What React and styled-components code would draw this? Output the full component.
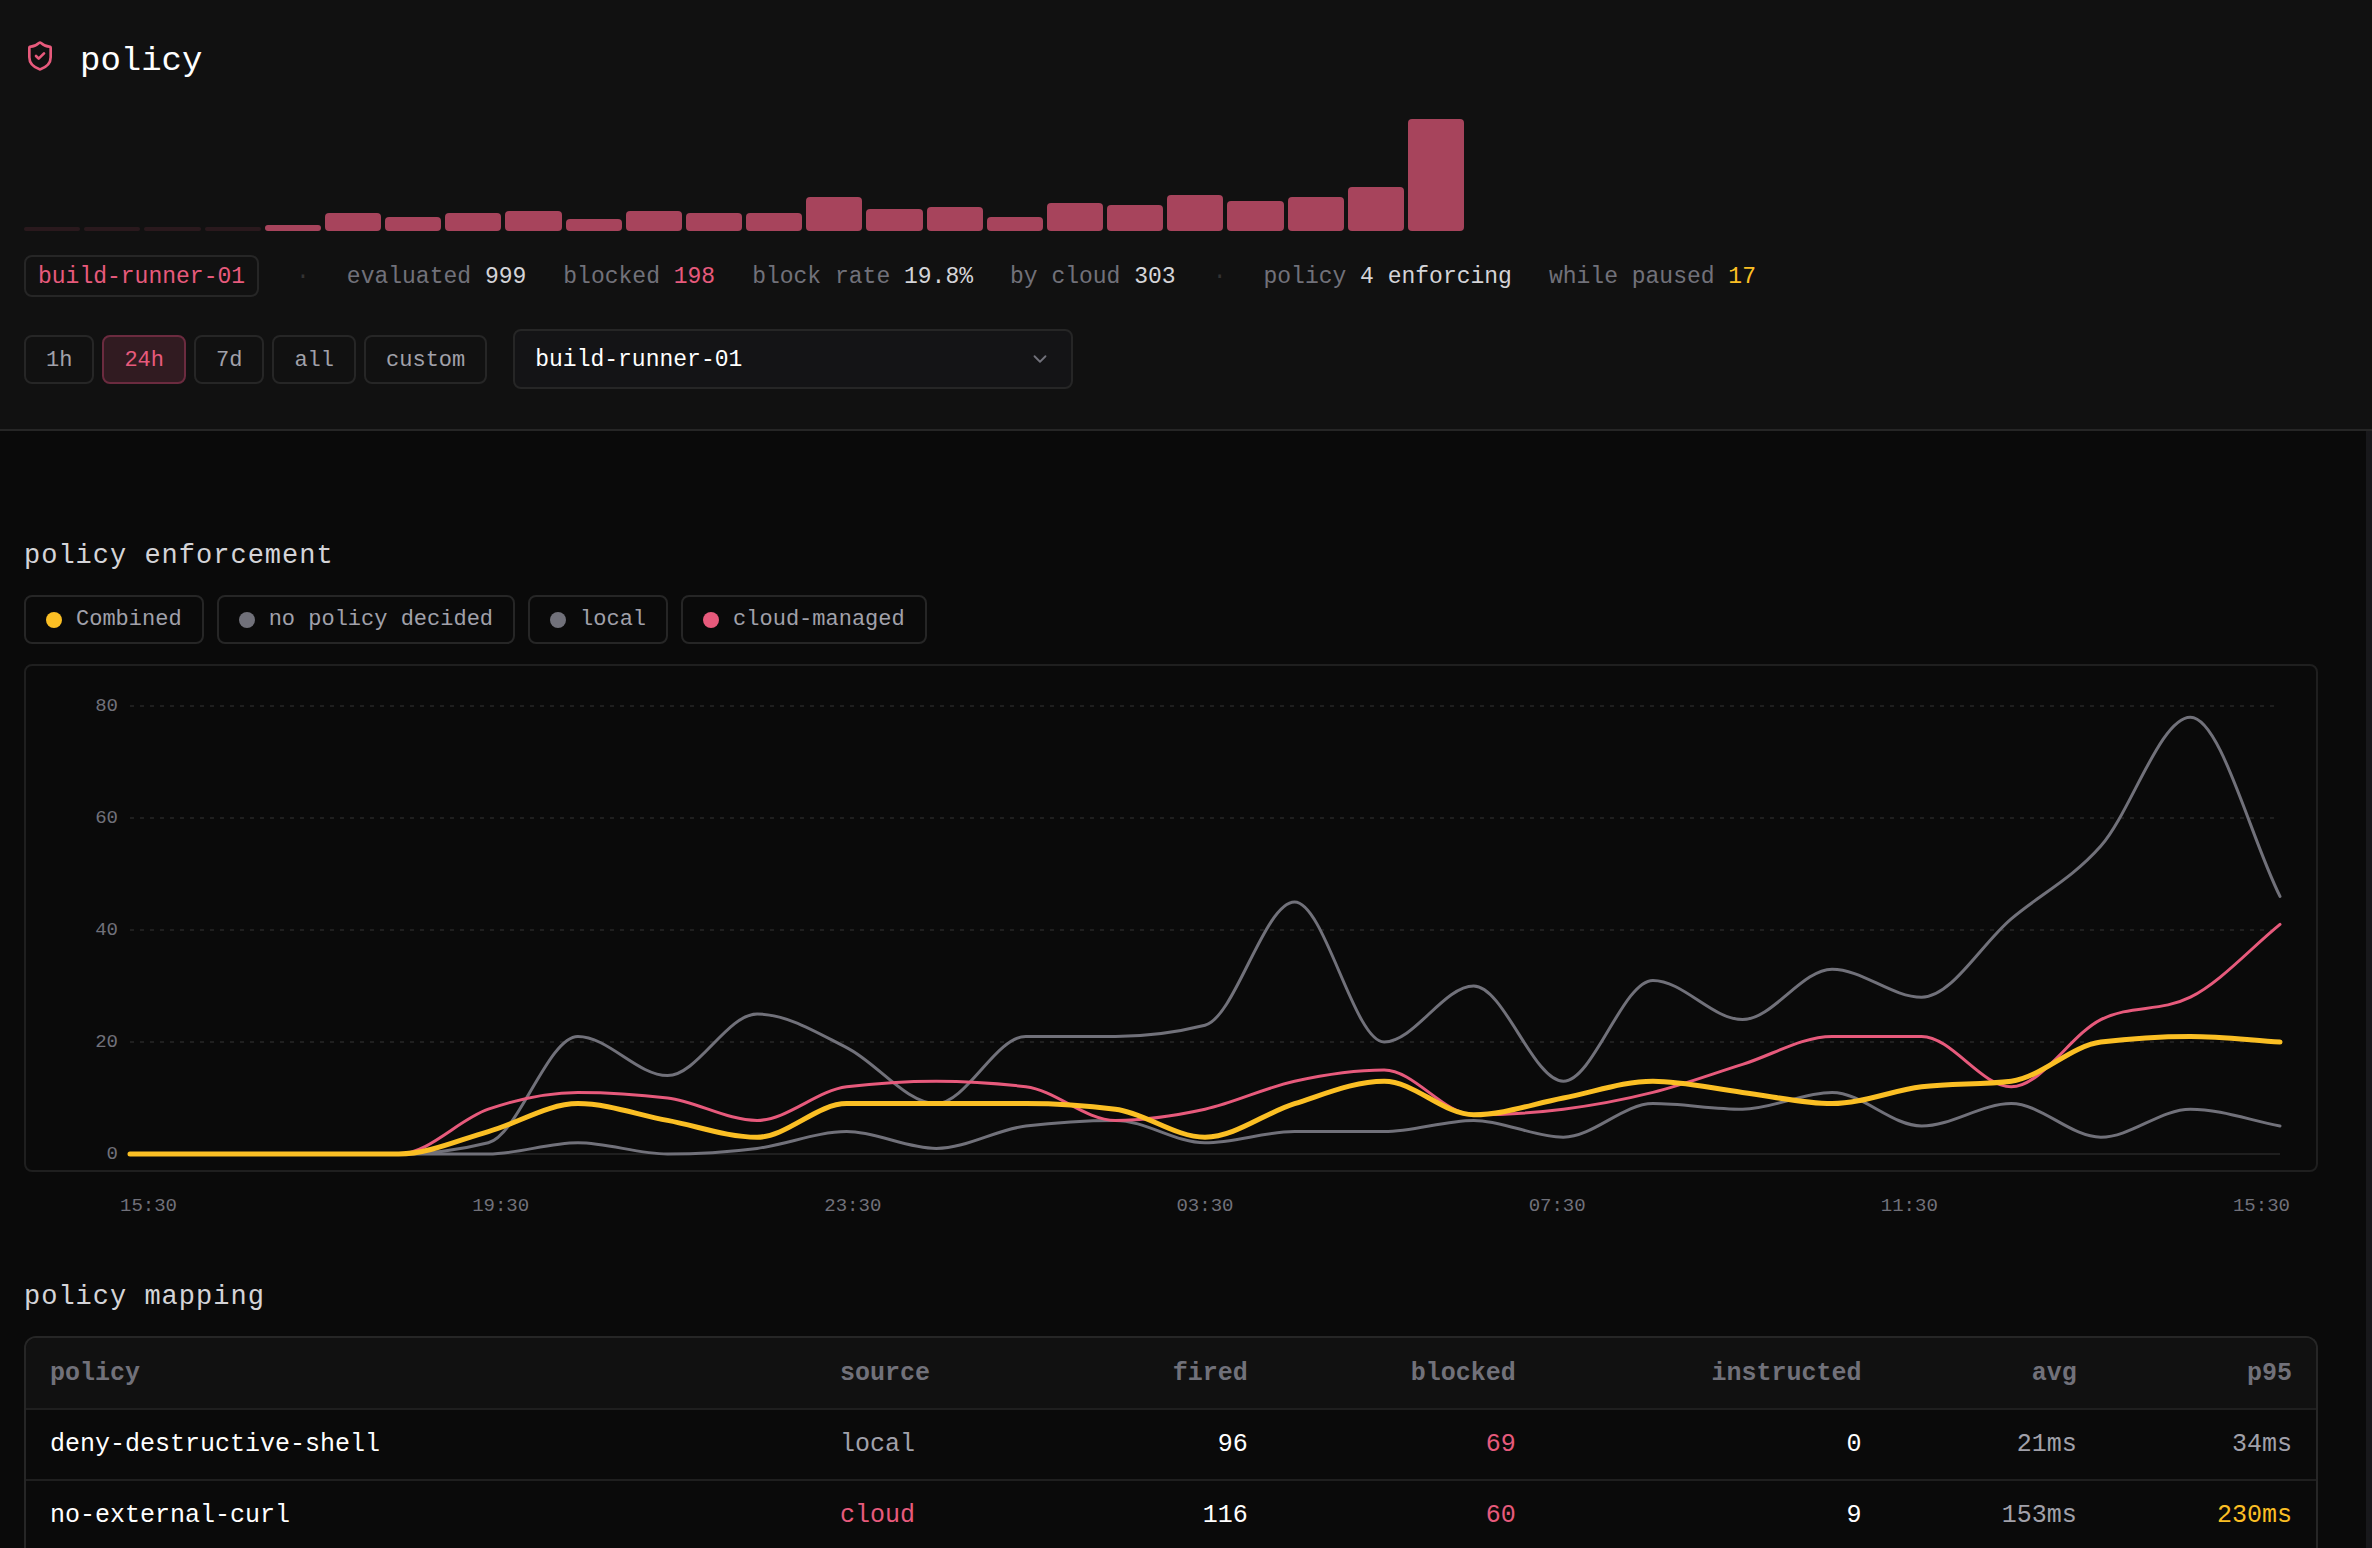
import styled, { createGlobalStyle } from "styled-components";
import { ChevronDown, ShieldCheck } from "lucide-react";

const GlobalStyle = createGlobalStyle`
  :root {
    --bg: #0a0a0a;
    --panel: #111111;
    --field: #141416;
    --line: #262626;
    --line-soft: #1f1f1f;
    --white: #ffffff;
    --text: #d4d4d8;
    --muted: #a1a1aa;
    --dim: #71717a;
    --accent: #e75a7c;
    --amber: #fbbf24;
  }

  * {
    box-sizing: border-box;
  }

  body {
    margin: 0;
    background: var(--bg);
    color: var(--text);
    font-family: "Liberation Mono", monospace;
    font-size: 22px;
  }

  button, select {
    font-family: inherit;
  }
`;

const Page = styled.div`
  display: flex;
  flex-direction: column;
  height: 100vh;
`;

const Header = styled.header`
  display: flex;
  flex-direction: column;
  padding: 36px 24px 40px;
  background: var(--panel);
  border-bottom: 2px solid var(--line);
`;

const TitleRow = styled.div`
  display: flex;
  gap: 24px;
  padding-top: 4px;

  svg {
    color: var(--accent);
  }
`;

const Title = styled.h1`
  margin: 0;
  color: var(--white);
  font-size: 34px;
  font-weight: 400;
  line-height: 43px;
`;

const Histogram = styled.div`
  display: flex;
  align-items: flex-end;
  gap: 4px;
  max-width: 1440px;
  height: 112px;
  margin-top: 36px;
`;

const Bar = styled.div`
  flex: 1;
  min-height: 4px;
  border-radius: 4px;
  background: var(--accent);
  opacity: ${({ $empty }) => ($empty ? 0.12 : 0.7)};
`;

const Stats = styled.div`
  display: flex;
  flex-wrap: wrap;
  align-items: baseline;
  gap: 37px;
  margin-top: 24px;
  font-size: 23px;
  line-height: 36px;
`;

const HostTag = styled.span`
  padding: 2px 12px 0;
  border: 2px solid var(--line);
  border-radius: 8px;
  color: var(--accent);
`;

const Separator = styled.span`
  color: #333333;
`;

const Stat = styled.span`
  color: var(--dim);
  white-space: nowrap;
`;

const StatValue = styled.span`
  color: ${({ $color }) => $color || "var(--text)"};
`;

const Controls = styled.div`
  display: flex;
  flex-wrap: wrap;
  align-items: center;
  gap: 26px;
  margin-top: 32px;
`;

const Ranges = styled.div`
  display: flex;
  gap: 8px;
`;

const RangeButton = styled.button`
  height: 49px;
  padding: 2px 20px 0;
  border: 2px solid ${({ $active }) => ($active ? "#6b2b3f" : "var(--line)")};
  border-radius: 8px;
  background: ${({ $active }) => ($active ? "#311b21" : "transparent")};
  color: ${({ $active }) => ($active ? "var(--accent)" : "var(--muted)")};
  font-size: 22px;
  cursor: pointer;
`;

const SelectBox = styled.label`
  display: flex;
  align-items: center;
  position: relative;
  flex: 0 1 560px;

  svg {
    position: absolute;
    right: 22px;
    color: var(--dim);
    pointer-events: none;
  }
`;

const Select = styled.select`
  width: 100%;
  height: 60px;
  padding: 2px 48px 0 20px;
  border: 2px solid var(--line);
  border-radius: 8px;
  background: var(--field);
  color: var(--white);
  font-size: 23px;
  appearance: none;
`;

const Body = styled.div`
  display: flex;
  flex: 1;
  min-height: 0;
`;

const Main = styled.main`
  flex: 1;
  min-width: 0;
  padding: 104px 48px 0 24px;
  overflow-y: auto;
  scrollbar-width: none;
`;

const ScrollTrack = styled.div`
  width: 6px;
  background: #18181b;
`;

const SectionTitle = styled.h2`
  margin: 0;
  font-size: 27px;
  font-weight: 400;
  line-height: 42px;
  letter-spacing: 1px;
`;

const Legend = styled.div`
  display: flex;
  flex-wrap: wrap;
  gap: 13px;
  margin: 18px 0 20px;
`;

const LegendButton = styled.button`
  display: flex;
  align-items: center;
  gap: 14px;
  height: 49px;
  padding: 0 20px;
  border: 2px solid var(--line);
  border-radius: 8px;
  background: transparent;
  color: var(--muted);
  font-size: 22px;
  line-height: 28px;
  cursor: pointer;
`;

const Dot = styled.span`
  width: 16px;
  height: 16px;
  border-radius: 50%;
  background: ${({ $color }) => $color};
`;

const ChartBox = styled.div`
  display: flex;
  gap: 12px;
  padding: 40px 36px 16px 0;
  border: 2px solid var(--line-soft);
  border-radius: 8px;
`;

const YAxis = styled.div`
  display: flex;
  flex-direction: column;
  justify-content: space-between;
  width: 92px;
  height: 468px;
  margin: -10px 0;
  color: var(--dim);
  font-size: 19px;
  line-height: 20px;
  text-align: right;
`;

const Plot = styled.svg`
  flex: 1;
  min-width: 0;
  height: 448px;
  overflow: visible;

  line,
  path {
    fill: none;
    vector-effect: non-scaling-stroke;
  }
`;

const XAxis = styled.div`
  display: flex;
  justify-content: space-between;
  padding: 22px 28px 0 96px;
  color: var(--dim);
  font-size: 19px;
  line-height: 24px;
`;

const MappingSection = styled.section`
  margin-top: 58px;
`;

const TableFrame = styled.div`
  margin-top: 18px;
  border: 2px solid var(--line);
  border-bottom: 0;
  border-radius: 12px 12px 0 0;
  overflow: hidden;
`;

const Table = styled.table`
  width: 100%;
  border-collapse: collapse;
  table-layout: fixed;
  font-size: 25px;
`;

const Th = styled.th`
  height: 71px;
  padding: 0 24px;
  border-bottom: 2px solid var(--line-soft);
  background: var(--panel);
  color: var(--dim);
  font-weight: 700;
  text-align: ${({ $right }) => ($right ? "right" : "left")};
`;

const Td = styled.td`
  height: 71px;
  padding: 0 24px;
  border-bottom: 2px solid var(--line-soft);
  color: ${({ $color }) => $color || "var(--white)"};
  text-align: ${({ $right }) => ($right ? "right" : "left")};
`;

const barHeights = [
  0, 0, 0, 0, 6, 18, 14, 18, 20, 12, 20, 18, 18, 34, 22, 24, 14, 28, 26, 36, 30,
  34, 44, 112,
];

const ranges = ["1h", "24h", "7d", "all", "custom"];

const series = [
  {
    name: "no policy decided",
    color: "var(--dim)",
    width: 3,
    values: [
      0, 0, 0, 0, 2, 21, 14, 25, 19, 9, 21, 21, 23, 45, 20, 30, 13, 31, 24, 33,
      28, 42, 55, 78, 46,
    ],
  },
  {
    name: "local",
    color: "var(--dim)",
    width: 3,
    values: [
      0, 0, 0, 0, 0, 2, 0, 1, 4, 1, 5, 6, 2, 4, 4, 6, 3, 9, 8, 11, 5, 9, 3, 8, 5,
    ],
  },
  {
    name: "cloud-managed",
    color: "var(--accent)",
    width: 3,
    values: [
      0, 0, 0, 0, 8, 11, 10, 6, 12, 13, 12, 6, 8, 13, 15, 7, 8, 11, 16, 21, 21,
      12, 24, 28, 41,
    ],
  },
  {
    name: "Combined",
    color: "var(--amber)",
    width: 5,
    values: [
      0, 0, 0, 0, 4, 9, 6, 3, 9, 9, 9, 8, 3, 9, 13, 7, 10, 13, 11, 9, 12, 13, 20,
      21, 20,
    ],
  },
];

const legend = [series[3], series[0], series[1], series[2]];
const yTicks = [80, 60, 40, 20, 0];
const xTicks = ["15:30", "19:30", "23:30", "03:30", "07:30", "11:30", "15:30"];

const columns = [
  { label: "policy", width: "34.5%" },
  { label: "source", width: "11.5%" },
  { label: "fired", width: "8.4%", right: true },
  { label: "blocked", width: "11.7%", right: true },
  { label: "instructed", width: "15.1%", right: true },
  { label: "avg", width: "9.4%", right: true },
  { label: "p95", width: "9.4%", right: true },
];

const policies = [
  {
    name: "deny-destructive-shell",
    source: "local",
    fired: 96,
    blocked: 69,
    instructed: 0,
    avg: 21,
    p95: 34,
  },
  {
    name: "no-external-curl",
    source: "cloud",
    fired: 116,
    blocked: 60,
    instructed: 9,
    avg: 153,
    p95: 230,
  },
];

const STEP = 100;
const MAX = 80;

function slopeAt(delta, i) {
  if (i === 0) return delta[0];
  if (i === delta.length) return delta[i - 1];
  const a = delta[i - 1];
  const b = delta[i];
  return (
    (Math.sign(a) + Math.sign(b)) *
    Math.min(Math.abs(a), Math.abs(b), Math.abs(a + b) / 4)
  );
}

// monotone cubic interpolation, so the curves never overshoot their points
function curve(values) {
  const delta = values.slice(1).map((v, i) => v - values[i]);
  const slopes = values.map((_, i) => slopeAt(delta, i));
  let d = `M0,${MAX - values[0]}`;
  for (let i = 1; i < values.length; i++) {
    const x = i * STEP;
    const y1 = MAX - values[i - 1] - slopes[i - 1] / 3;
    const y2 = MAX - values[i] + slopes[i] / 3;
    d += `C${x - (STEP * 2) / 3},${y1} ${x - STEP / 3},${y2} ${x},${MAX - values[i]}`;
  }
  return d;
}

function Chart() {
  const width = STEP * 24;
  return (
    <ChartBox>
      <YAxis>
        {yTicks.map((tick) => (
          <span key={tick}>{tick}</span>
        ))}
      </YAxis>
      <Plot
        viewBox={`0 0 ${width} ${MAX}`}
        preserveAspectRatio="none"
        role="img"
        aria-label="policy enforcement over time"
      >
        {yTicks.map((tick) => (
          <line
            key={tick}
            x1="0"
            x2={width}
            y1={MAX - tick}
            y2={MAX - tick}
            stroke="var(--line-soft)"
            strokeWidth="2"
            strokeDasharray={tick ? "4 6" : undefined}
          />
        ))}
        {series.map((s) => (
          <path
            key={s.name}
            d={curve(s.values)}
            stroke={s.color}
            strokeWidth={s.width}
            strokeLinecap="round"
          />
        ))}
      </Plot>
    </ChartBox>
  );
}

function PolicyRow({ policy }) {
  return (
    <tr>
      <Td>{policy.name}</Td>
      <Td $color={policy.source === "cloud" ? "var(--accent)" : "var(--muted)"}>
        {policy.source}
      </Td>
      <Td $right>{policy.fired}</Td>
      <Td $right $color="var(--accent)">
        {policy.blocked}
      </Td>
      <Td $right>{policy.instructed}</Td>
      <Td $right $color="var(--muted)">{`${policy.avg}ms`}</Td>
      <Td
        $right
        $color={policy.p95 > 200 ? "var(--amber)" : "var(--muted)"}
      >{`${policy.p95}ms`}</Td>
    </tr>
  );
}

export default function App() {
  return (
    <Page>
      <GlobalStyle />
      <Header>
        <TitleRow>
          <ShieldCheck size={32} />
          <Title>policy</Title>
        </TitleRow>
        <Histogram>
          {barHeights.map((height, i) => (
            <Bar key={i} $empty={height === 0} style={{ height }} />
          ))}
        </Histogram>
        <Stats>
          <HostTag>build-runner-01</HostTag>
          <Separator>·</Separator>
          <Stat>
            evaluated <StatValue>999</StatValue>
          </Stat>
          <Stat>
            blocked <StatValue $color="var(--accent)">198</StatValue>
          </Stat>
          <Stat>
            block rate <StatValue>19.8%</StatValue>
          </Stat>
          <Stat>
            by cloud <StatValue>303</StatValue>
          </Stat>
          <Separator>·</Separator>
          <Stat>
            policy <StatValue>4 enforcing</StatValue>
          </Stat>
          <Stat>
            while paused <StatValue $color="var(--amber)">17</StatValue>
          </Stat>
        </Stats>
        <Controls>
          <Ranges>
            {ranges.map((range) => (
              <RangeButton key={range} type="button" $active={range === "24h"}>
                {range}
              </RangeButton>
            ))}
          </Ranges>
          <SelectBox>
            <Select aria-label="host" defaultValue="build-runner-01">
              <option>build-runner-01</option>
            </Select>
            <ChevronDown size={22} />
          </SelectBox>
        </Controls>
      </Header>
      <Body>
        <Main>
          <section>
            <SectionTitle>policy enforcement</SectionTitle>
            <Legend>
              {legend.map((item) => (
                <LegendButton key={item.name} type="button">
                  <Dot $color={item.color} />
                  {item.name}
                </LegendButton>
              ))}
            </Legend>
            <Chart />
            <XAxis>
              {xTicks.map((tick, i) => (
                <span key={i}>{tick}</span>
              ))}
            </XAxis>
          </section>
          <MappingSection>
            <SectionTitle>policy mapping</SectionTitle>
            <TableFrame>
              <Table>
                <colgroup>
                  {columns.map((c) => (
                    <col key={c.label} width={c.width} />
                  ))}
                </colgroup>
                <thead>
                  <tr>
                    {columns.map((c) => (
                      <Th key={c.label} $right={c.right}>
                        {c.label}
                      </Th>
                    ))}
                  </tr>
                </thead>
                <tbody>
                  {policies.map((p) => (
                    <PolicyRow key={p.name} policy={p} />
                  ))}
                </tbody>
              </Table>
            </TableFrame>
          </MappingSection>
        </Main>
        <ScrollTrack />
      </Body>
    </Page>
  );
}
